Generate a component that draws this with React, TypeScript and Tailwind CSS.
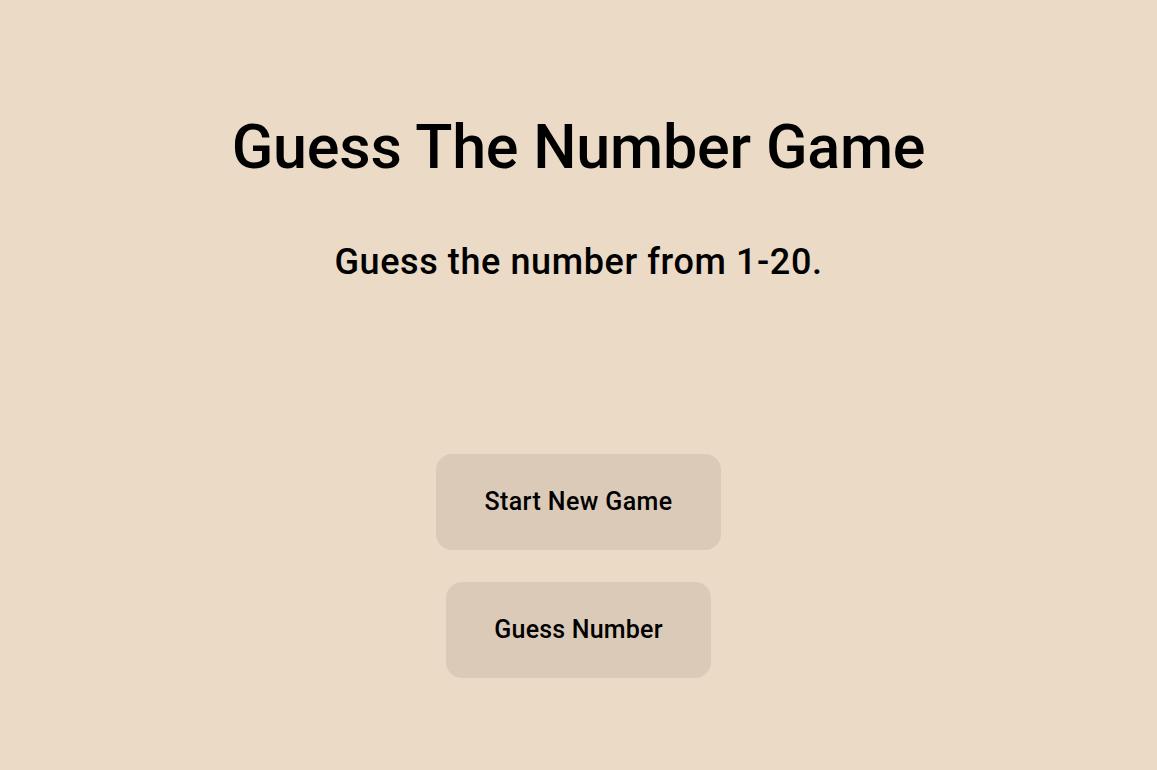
export default function App() {
  return (
    <main className="min-h-[770px] w-full bg-[#eadac6] text-black font-['Roboto',sans-serif] flex flex-col items-center">
      <h1 className="mt-[112px] text-[61px] leading-[70px] font-medium tracking-[-0.2px]">
        Guess The Number Game
      </h1>
      <p className="mt-[60px] text-[36px] leading-[40px] font-medium tracking-[0.6px]">
        Guess the number from 1-20.
      </p>
      <div className="mt-[172px] flex flex-col items-center gap-8">
        <button className="h-24 px-12 rounded-2xl bg-[#dbcab7] text-[25px] font-medium tracking-[0.4px]">
          Start New Game
        </button>
        <button className="h-24 px-12 rounded-2xl bg-[#dbcab7] text-[25px] font-medium tracking-[0.2px]">
          Guess Number
        </button>
      </div>
    </main>
  );
}
